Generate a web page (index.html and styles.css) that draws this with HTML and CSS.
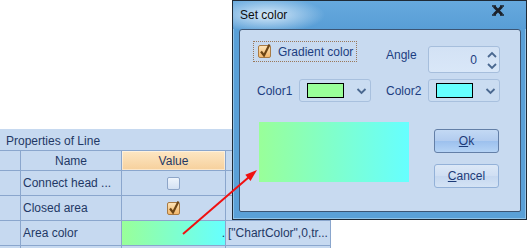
FILE: index.html
```html
<!DOCTYPE html>
<html>
<head>
<meta charset="utf-8">
<title>Set color</title>
<link rel="stylesheet" href="styles.css">
</head>
<body>
<div class="desk">
  <section class="props">
    <div class="props-title">Properties of Line</div>
    <div class="grid">
      <div class="c"></div><div class="c hd">Name</div><div class="c hd val">Value</div><div class="c"></div>
      <div class="c"></div><div class="c nm">Connect head ...</div><div class="c ctr"><span class="cb"></span></div><div class="c"></div>
      <div class="c"></div><div class="c nm">Closed area</div><div class="c ctr"><span class="cb on"><svg class="tick" viewBox="0 0 14 14" width="14" height="14"><path d="M3 6.5 L6 10.5 L11.5 -0.5"/></svg></span></div><div class="c"></div>
      <div class="c"></div><div class="c nm">Area color</div><div class="c grad"><span class="dot">.</span></div><div class="c nm">["ChartColor",0,tr...</div>
      <div class="c"></div><div class="c"></div><div class="c"></div><div class="c"></div>
    </div>
  </section>

  <section class="dlg">
    <header class="dlg-bar">
      <span class="dlg-title">Set color</span>
      <svg class="dlg-x" viewBox="0 0 12 11" width="12" height="11">
        <path class="x-arm" d="M2 1.5 L10 9.5 M10 1.5 L2 9.5"/>
        <path class="x-serif" d="M0 1 H4 M8 1 H12 M0 10 H4 M8 10 H12"/>
      </svg>
    </header>
    <div class="dlg-body">
      <div class="row r1">
        <div class="focus"><span class="cb on"><svg class="tick" viewBox="0 0 14 14" width="14" height="14"><path d="M3 6.5 L6 10.5 L11.5 -0.5"/></svg></span><span>Gradient color</span></div>
        <span class="lbl l-angle">Angle</span>
        <div class="spin"><span class="spin-val">0</span><svg class="spin-arr" viewBox="0 0 10 20" width="10" height="20"><path d="M1 7 L5 3 L9 7 M1 14 L5 18 L9 14"/></svg></div>
      </div>
      <div class="row r2">
        <span class="lbl l-c1">Color1</span>
        <div class="combo"><span class="sw sw-green"></span><svg class="chev" viewBox="0 0 11 8" width="11" height="8"><path d="M1.5 2 L5.5 6 L9.5 2"/></svg></div>
        <span class="lbl l-c2">Color2</span>
        <div class="combo"><span class="sw sw-cyan"></span><svg class="chev" viewBox="0 0 11 8" width="11" height="8"><path d="M1.5 2 L5.5 6 L9.5 2"/></svg></div>
      </div>
      <div class="row r3">
        <div class="preview"></div>
        <div class="btns">
          <button class="btn btn-ok"><u>O</u>k</button>
          <button class="btn"><u>C</u>ancel</button>
        </div>
      </div>
    </div>
  </section>

  <svg class="arrow" viewBox="0 0 527 248" width="527" height="248">
    <line x1="183" y1="234" x2="249" y2="177" class="arrow-line"/>
    <polygon points="257,170 250.5,180.9 245.3,174.8" class="arrow-head"/>
  </svg>
</div>
</body>
</html>
```

FILE: styles.css
```css
html, body {
  margin: 0;
  padding: 0;
  background: #ffffff;
  overflow: hidden;
}
body {
  font-family: "Liberation Sans", Arial, sans-serif;
  font-size: 12px;
  line-height: 14px;
}
.desk {
  position: relative;
  width: 527px;
  height: 248px;
  overflow: hidden;
}

/* ---------- properties panel ---------- */
.props {
  position: absolute;
  left: 0;
  top: 129px;
  width: 331px;
  background: #c6d9f0;
  color: #1f3865;
}
.props-title {
  height: 16px;
  padding: 5px 0 0 6px;
}
.grid {
  display: grid;
  grid-template-columns: 20px 100px 103px 104px;
  grid-template-rows: 19px 24px 24px 24px 24px;
  gap: 1px;
  padding: 1px 1px 0 0;
  background: #8aa6cd;
}
.c {
  background: #c6d9f0;
  display: flex;
  align-items: center;
  overflow: hidden;
  white-space: nowrap;
}
.hd { justify-content: center; }
.val {
  background: linear-gradient(#fde7c4, #f6d09c);
  box-shadow: inset 0 0 0 1px rgba(255, 255, 255, 0.45);
}
.nm { padding-left: 2px; }
.ctr { justify-content: center; }
.grad {
  background: linear-gradient(to right, #99ff99, #66ffff);
  justify-content: flex-end;
}
.dot {
  color: #1f3865;
  margin-right: 0;
}

/* checkboxes */
.cb {
  position: relative;
  display: block;
  width: 13px;
  height: 13px;
  box-sizing: border-box;
  border: 1px solid #8da5c8;
  border-radius: 2px;
  background: linear-gradient(#eef4fc, #d3e1f3);
  flex: none;
}
.cb.on {
  border-color: #a87a44;
  background: linear-gradient(#fde3b6, #f3b86c);
}
.tick {
  position: absolute;
  left: -1px;
  top: -1px;
  overflow: visible;
}
.tick path {
  fill: none;
  stroke: #6d4514;
  stroke-width: 2.2;
  stroke-linejoin: miter;
}

/* ---------- dialog ---------- */
.dlg {
  position: absolute;
  left: 232px;
  top: 0;
  width: 295px;
  height: 220px;
  box-sizing: border-box;
  border: 1px solid #1f2a36;
  background: #5aa0d7;
  box-shadow: inset 0 0 0 1px rgba(190, 225, 250, 0.55);
}
.dlg-bar {
  height: 28px;
  display: flex;
  align-items: flex-start;
  background:
    radial-gradient(ellipse 58px 18px at 34px 14px, rgba(235, 245, 255, 0.85), rgba(235, 245, 255, 0) 100%),
    linear-gradient(#66a9de, #589ed6);
}
.dlg-title {
  margin: 7px 0 0 7px;
  color: #0e0e0e;
}
.dlg-x {
  margin: 4px 22px 0 auto;
}
.x-arm {
  fill: none;
  stroke: #1b2029;
  stroke-width: 2.8;
}
.x-serif {
  fill: none;
  stroke: #1b2029;
  stroke-width: 1.4;
}
.dlg-body {
  margin: 0 5px 0 6px;
  width: 282px;
  height: 183px;
  box-sizing: border-box;
  border: 1px solid #3c5574;
  border-radius: 3px 3px 2px 2px;
  background: #c8daf0;
  padding-top: 11px;
  color: #1c3d80;
}
.row {
  display: flex;
}
.r1 {
  height: 32px;
  align-items: flex-start;
}
.focus {
  margin-left: 13px;
  width: 104px;
  height: 21px;
  box-sizing: border-box;
  border: 1px dotted #9a785a;
  display: flex;
  align-items: center;
  padding-left: 4px;
  gap: 7px;
}
.lbl {
  width: 42px;
  flex: none;
}
.l-angle {
  margin: 7px 0 0 29px;
}
.spin {
  margin-top: 5px;
  width: 72px;
  height: 27px;
  box-sizing: border-box;
  border: 1px solid #a6bedc;
  border-radius: 3px;
  background: linear-gradient(#d3e2f5, #d9e7f8);
  display: flex;
  align-items: center;
  justify-content: flex-end;
  padding-right: 2px;
}
.spin-val {
  margin-right: 10px;
}
.spin-arr path,
.chev path {
  fill: none;
  stroke: #4a6890;
  stroke-width: 1.8;
}
.r2 {
  margin-top: 6px;
  height: 23px;
  align-items: center;
}
.l-c1 { margin-left: 17px; }
.l-c2 { margin-left: 15px; }
.combo {
  width: 72px;
  height: 23px;
  box-sizing: border-box;
  border: 1px solid #a8c0de;
  border-radius: 3px;
  background: #cadcf1;
  display: flex;
  align-items: center;
  padding-left: 7px;
}
.sw {
  width: 37px;
  height: 15px;
  box-sizing: border-box;
  border: 1px solid #000000;
  flex: none;
}
.sw-green { background: #99ff99; }
.sw-cyan { background: #66ffff; }
.chev {
  margin-left: 12px;
}
.r3 {
  margin-top: 20px;
  align-items: flex-start;
}
.preview {
  margin-left: 19px;
  width: 150px;
  height: 60px;
  background: linear-gradient(to right, #99ff99, #66ffff);
}
.btns {
  margin: 7px 0 0 25px;
  display: flex;
  flex-direction: column;
  gap: 11px;
}
.btn {
  width: 65px;
  height: 24px;
  box-sizing: border-box;
  padding: 0;
  border: 1px solid #93b1d8;
  border-radius: 3px;
  background: linear-gradient(#dce8f7 0%, #d0dff3 48%, #c6d8f0 52%, #d4e3f5 100%);
  font-family: "Liberation Sans", Arial, sans-serif;
  font-size: 12px;
  line-height: 14px;
  color: #1d3b78;
}
.btn-ok {
  border-color: #637fa7;
  background: linear-gradient(#c3d9f4 0%, #b2ccef 48%, #9dc1ee 52%, #b5d3f5 100%);
}

/* ---------- annotation ---------- */
.arrow {
  position: absolute;
  left: 0;
  top: 0;
  pointer-events: none;
}
.arrow-line {
  stroke: #f01010;
  stroke-width: 2;
}
.arrow-head {
  fill: #f01010;
}
```
